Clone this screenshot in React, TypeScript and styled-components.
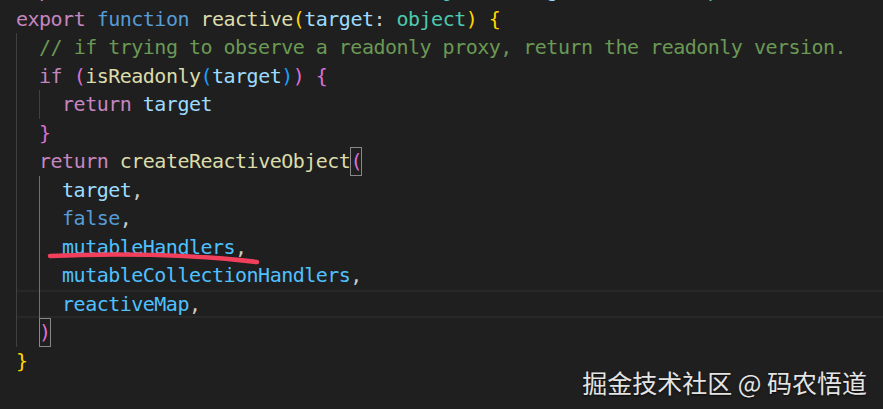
import React from "react";
import styled, { createGlobalStyle } from "styled-components";

const Global = createGlobalStyle`
  html, body { margin: 0; padding: 0; background: #1f1f1f; }
  #root { width: 883px; height: 409px; }
`;

const C = {
  ctrl: "#C586C0",
  store: "#569CD6",
  fn: "#DCDCAA",
  vari: "#9CDCFE",
  cnst: "#4FC1FF",
  type: "#4EC9B0",
  cmt: "#6A9955",
  punct: "#CCCCCC",
  gold: "#FFD700",
  purple: "#DA70D6",
  blue: "#179FFF",
};

const CELL = 11.53;

const Screen = styled.div`
  position: relative;
  width: 883px;
  height: 409px;
  overflow: hidden;
  background: #1f1f1f;
`;

const Code = styled.div`
  display: flex;
  flex-direction: column;
  margin-top: -23.75px;
  padding-left: 16px;
  font-family: "DejaVu Sans Mono", "Liberation Mono", monospace;
  font-size: 20px;
  letter-spacing: ${CELL - 20 * 0.60205}px;
  white-space: pre;
`;

const Line = styled.div<{ $current?: boolean }>`
  height: 28.5px;
  line-height: 28.5px;
  display: flex;
  align-items: stretch;
  box-shadow: ${(p) =>
    p.$current ? "inset 0 2px 0 #282828, inset 0 -2px 0 #282828" : "none"};
`;

const Indent = styled.span<{ $guide: "" | "n" | "a" }>`
  display: inline-block;
  width: ${CELL * 2}px;
  flex: none;
  box-shadow: ${(p) =>
    p.$guide === "n"
      ? "inset 1px 0 0 #404040"
      : p.$guide === "a"
      ? "inset 1px 0 0 #707070"
      : "none"};
`;

const Token = styled.span<{ $c: string; $boxed?: boolean }>`
  display: inline-block;
  color: ${(p) => p.$c};
  outline: ${(p) => (p.$boxed ? "1px solid #888888" : "none")};
  outline-offset: -1px;
`;

const Mark = styled.svg`
  position: absolute;
  left: 0;
  top: 0;
  pointer-events: none;
`;

const Watermark = styled.div`
  position: absolute;
  right: 16px;
  top: 364px;
  font-family: "Noto Sans CJK SC", "Noto Sans", sans-serif;
  font-size: 25px;
  line-height: 36px;
  color: #e4e4e4;
  text-shadow: 0 1px 2px rgba(0, 0, 0, 0.7);
  white-space: pre;
`;

type Tok = [string, string, boolean?];
type LineDef = { g: ("" | "n" | "a")[]; t: Tok[]; cur?: boolean };

const sp: Tok = [" ", C.punct];

const lines: LineDef[] = [
  {
    g: [],
    t: [
      ["export", C.ctrl], sp, ["function", C.store], sp, ["reactive", C.fn],
      ["<", C.punct], ["T", C.type], sp, ["extends", C.store], sp, ["object", C.type],
      [">", C.punct], ["(", C.gold], ["target", C.vari], [":", C.punct], sp,
      ["T", C.type], [")", C.gold], [":", C.punct], sp, ["UnwrapNestedRefs", C.type],
      ["<", C.punct], ["T", C.type], [">", C.punct],
    ],
  },
  {
    g: [],
    t: [
      ["export", C.ctrl], sp, ["function", C.store], sp, ["reactive", C.fn],
      ["(", C.gold], ["target", C.vari], [":", C.punct], sp, ["object", C.type],
      [")", C.gold], sp, ["{", C.gold],
    ],
  },
  {
    g: ["n"],
    t: [["// if trying to observe a readonly proxy, return the readonly version.", C.cmt]],
  },
  {
    g: ["n"],
    t: [
      ["if", C.ctrl], sp, ["(", C.purple], ["isReadonly", C.fn], ["(", C.blue],
      ["target", C.vari], [")", C.blue], [")", C.purple], sp, ["{", C.purple],
    ],
  },
  { g: ["n", "n"], t: [["return", C.ctrl], sp, ["target", C.vari]] },
  { g: ["n"], t: [["}", C.purple]] },
  {
    g: ["n"],
    t: [["return", C.ctrl], sp, ["createReactiveObject", C.fn], ["(", C.purple, true]],
  },
  { g: ["n", "a"], t: [["target", C.vari], [",", C.punct]] },
  { g: ["n", "a"], t: [["false", C.store], [",", C.punct]] },
  { g: ["n", "a"], t: [["mutableHandlers", C.cnst], [",", C.punct]] },
  { g: ["n", "a"], t: [["mutableCollectionHandlers", C.cnst], [",", C.punct]] },
  { g: ["n", "a"], t: [["reactiveMap", C.cnst], [",", C.punct]], cur: true },
  { g: ["n"], t: [[")", C.purple, true]] },
  { g: [], t: [["}", C.gold]] },
];

export default function App() {
  return (
    <>
      <Global />
      <Screen>
        <Code>
          {lines.map((l, i) => (
            <Line key={i} $current={l.cur}>
              {l.g.map((g, j) => (
                <Indent key={j} $guide={g} />
              ))}
              {l.t.map((t, j) => (
                <Token key={j} $c={t[1]} $boxed={t[2]}>
                  {t[0]}
                </Token>
              ))}
            </Line>
          ))}
        </Code>
        <Mark width="883" height="409" viewBox="0 0 883 409">
          <path
            d="M50 256 C 110 253, 190 254, 257 262"
            fill="none"
            stroke="#f2405c"
            strokeWidth="4.5"
            strokeLinecap="round"
          />
        </Mark>
        <Watermark>掘金技术社区 @ 码农悟道</Watermark>
      </Screen>
    </>
  );
}
